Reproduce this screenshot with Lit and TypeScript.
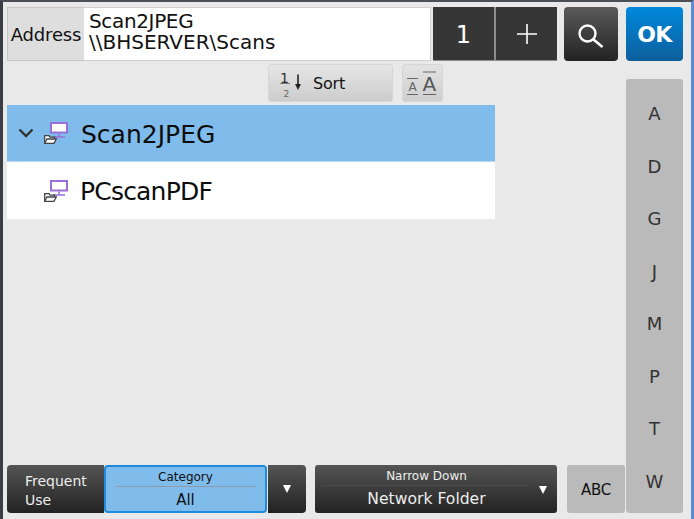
import { LitElement, html, css } from "lit";
import { customElement } from "lit/decorators.js";

const monitorIcon = html`<svg class="ficon" width="34" height="26" viewBox="0 0 34 26">
  <rect x="7" y="3" width="16" height="9.500" fill="#fff" stroke="#9a6fd6" stroke-width="2"/>
  <path d="M15 13.500v3M9 17h12" stroke="#9a6fd6" stroke-width="1.500" fill="none"/>
  <path d="M0.700 23.300v-7.600h4.300l1 1.500h4.500v1.500" fill="#fff" stroke="#444" stroke-width="1.300"/>
  <path d="M0.700 23.300l2.300-4.300h9.300l-2.300 4.300z" fill="#fff" stroke="#444" stroke-width="1.300"/>
</svg>`;

@customElement("app-root")
export class AppRoot extends LitElement {
  static styles = css`
    :host {
      display: block;
      width: 694px;
      height: 519px;
      overflow: hidden;
      font-family: "DejaVu Sans", sans-serif;
      color: #111;
    }
    .frame {
      box-sizing: border-box;
      width: 694px;
      height: 519px;
      background: #e9e9e9;
      border-left: 3px solid #3a3d44;
      border-right: 3px solid #5b8dd0;
      border-top: 2px solid #4a4f58;
      padding: 5px 8px 6px 4px;
      display: flex;
      flex-direction: column;
    }
    .top {
      display: flex;
      height: 54px;
      flex: none;
    }
    .addr-label {
      box-sizing: border-box;
      width: 77px;
      background: #dedede;
      border: 1px solid #c6c6c6;
      border-right: none;
      font-size: 18px;
      letter-spacing: -0.15px;
      display: flex;
      align-items: center;
      justify-content: center;
    }
    .addr-value {
      box-sizing: border-box;
      width: 347px;
      background: #fff;
      border: 1px solid #d0d0d0;
      border-left: none;
      font-size: 20px;
      line-height: 21px;
      padding: 3px 0 0 5px;
    }
    .addr-first {
      letter-spacing: -0.35px;
    }
    .stepper {
      display: flex;
      gap: 2px;
      margin-left: 2px;
      background: #8d8d8d;
      border-bottom: 1px solid #8d8d8d;
      box-sizing: border-box;
    }
    .step {
      width: 61px;
      background: #363636;
      color: #fff;
      font-size: 24px;
      display: flex;
      align-items: center;
      justify-content: center;
      box-sizing: border-box;
    }
    .step.num {
      padding-top: 3px;
    }
    .search {
      width: 54px;
      margin-left: 7px;
      border-radius: 4px;
      background: linear-gradient(#5a5a5a, #222);
      display: flex;
      align-items: center;
      justify-content: center;
      box-sizing: border-box;
      padding-top: 3px;
    }
    .ok {
      width: 57px;
      margin-left: 8px;
      border-radius: 4px;
      background: linear-gradient(#0088dc, #0d5f9c);
      color: #fff;
      font-size: 22px;
      letter-spacing: -0.5px;
      font-weight: bold;
      display: flex;
      align-items: center;
      justify-content: center;
    }
    .body {
      display: flex;
      flex: 1;
      min-height: 0;
      margin-top: 3px;
    }
    .main {
      flex: 1;
      min-width: 0;
      display: flex;
      flex-direction: column;
    }
    .tools {
      display: flex;
      height: 38px;
      flex: none;
      padding-left: 261px;
      gap: 9px;
    }
    .sort {
      box-sizing: border-box;
      width: 125px;
      height: 38px;
      border: 1px solid #d6d6d6;
      border-radius: 3px;
      background: linear-gradient(#e6e6e6, #cccccc);
      font-size: 16px;
      letter-spacing: -0.2px;
      display: flex;
      align-items: center;
      padding-left: 11px;
      gap: 9px;
    }
    .size {
      box-sizing: border-box;
      width: 41px;
      height: 38px;
      border: 1px solid #d6d6d6;
      border-radius: 3px;
      background: linear-gradient(#e2e2e2, #cfcfcf);
      display: flex;
      align-items: center;
      padding-left: 4px;
    }
    .list {
      width: 488px;
      margin-top: 3px;
      flex: none;
    }
    .row {
      height: 57px;
      background: #fff;
      display: flex;
      align-items: center;
      font-size: 25px;
      color: #0c0c0c;
      box-sizing: border-box;
    }
    .row.sel {
      background: #7fbcec;
      border-bottom: 1px solid #bcd7ee;
    }
    .chev {
      width: 37px;
      flex: none;
      display: flex;
      padding-left: 11px;
      box-sizing: border-box;
    }
    .row .name {
      margin-left: 3px;
      margin-top: 2px;
    }
    .row .name.tight {
      margin-left: 2px;
      letter-spacing: -0.8px;
    }
    .spacer {
      flex: 1;
    }
    .bottom {
      display: flex;
      height: 48px;
      flex: none;
    }
    .freq {
      box-sizing: border-box;
      width: 97px;
      border-radius: 4px 0 0 4px;
      background: linear-gradient(#555, #222);
      color: #eee;
      font-size: 14px;
      line-height: 19px;
      padding: 7px 0 0 18px;
    }
    .cat {
      box-sizing: border-box;
      width: 163px;
      border: 2px solid #1e8bdc;
      border-radius: 4px;
      background: #7fbcec;
      text-align: center;
      padding: 0 9px;
      display: flex;
      flex-direction: column;
    }
    .stack-top {
      font-size: 12px;
      height: 19px;
      line-height: 20px;
      border-bottom: 1px solid #8f9ba6;
      flex: none;
    }
    .stack-bottom {
      font-size: 15px;
      line-height: 26px;
    }
    .drop {
      box-sizing: border-box;
      width: 38px;
      margin-left: 1px;
      border-radius: 0 4px 4px 0;
      background: linear-gradient(#555, #222);
      display: flex;
      align-items: center;
      justify-content: center;
    }
    .tri {
      width: 0;
      height: 0;
      border-left: 4.500px solid transparent;
      border-right: 4.500px solid transparent;
      border-top: 8px solid #fff;
    }
    .narrow {
      position: relative;
      box-sizing: border-box;
      width: 242px;
      margin-left: 9px;
      border-radius: 3px;
      background: linear-gradient(#555, #222);
      color: #eee;
      text-align: center;
      padding: 2px 29px 0 7px;
      display: flex;
      flex-direction: column;
    }
    .narrow .stack-top {
      height: 18px;
      border-bottom-color: #4c4c4c;
      line-height: 19px;
      padding-left: 3px;
    }
    .narrow .stack-bottom {
      font-size: 15.600px;
      line-height: 26px;
      padding-left: 3px;
      white-space: nowrap;
    }
    .narrow .tri {
      position: absolute;
      right: 10px;
      top: 21px;
    }
    .abc {
      box-sizing: border-box;
      width: 58px;
      margin-left: 10px;
      border-radius: 3px;
      background: #bababa;
      font-size: 15px;
      letter-spacing: -0.3px;
      display: flex;
      align-items: center;
      justify-content: center;
      padding-top: 2px;
    }
    .alpha {
      box-sizing: border-box;
      width: 57px;
      margin-top: 15px;
      margin-left: 1px;
      background: #bababa;
      border-radius: 3px;
      display: flex;
      flex-direction: column;
      align-items: center;
      color: #333;
      font-size: 18px;
      padding-top: 8.500px;
    }
    .alpha span {
      height: 52.500px;
      flex: none;
      display: flex;
      align-items: center;
    }
  `;

  render() {
    return html`<div class="frame">
      <div class="top">
        <div class="addr-label">Address</div>
        <div class="addr-value"><div class="addr-first">Scan2JPEG</div><div>\\\\BHSERVER\\Scans</div></div>
        <div class="stepper">
          <div class="step num">1</div>
          <div class="step">
            <svg width="20" height="20" viewBox="0 0 20 20"><path d="M10 0v20M0 10h20" stroke="#fff" stroke-width="1.600"/></svg>
          </div>
        </div>
        <div class="search">
          <svg width="26" height="24" viewBox="0 0 26 24" fill="none" stroke="#fff">
            <circle cx="9.500" cy="9.500" r="8" stroke-width="2.400"/>
            <path d="M15.500 15.500L24.500 23" stroke-width="2.600"/>
          </svg>
        </div>
        <div class="ok">OK</div>
      </div>
      <div class="body">
        <div class="main">
          <div class="tools">
            <div class="sort">
              <svg width="24" height="30" viewBox="0 0 24 30" font-family="DejaVu Sans">
                <text x="0" y="14.500" font-size="14" fill="#333">1</text>
                <path d="M0 15.500h10" stroke="#777" stroke-width="1"/>
                <text x="3.500" y="28.500" font-size="9" fill="#666">2</text>
                <path d="M18 6.500v12" stroke="#222" stroke-width="1.600"/>
                <path d="M15 16l3 6 3-6z" fill="#222"/>
              </svg>
              <span>Sort</span>
            </div>
            <div class="size">
              <svg width="32" height="27" viewBox="0 0 32 27" font-family="DejaVu Sans">
                <path d="M0 8.500h11M0 24.500h11M16 2h13M16 24.500h13" stroke="#666" stroke-width="1"/>
                <text x="1.500" y="21" font-size="12" fill="#666">A</text>
                <text x="15.500" y="20.500" font-size="20" fill="#555">A</text>
              </svg>
            </div>
          </div>
          <div class="list">
            <div class="row sel">
              <div class="chev">
                <svg width="16" height="12" viewBox="0 0 16 12" fill="none"><path d="M1.500 2.500L8 9l6.500-6.500" stroke="#333" stroke-width="2.400"/></svg>
              </div>
              ${monitorIcon}
              <div class="name">Scan2JPEG</div>
            </div>
            <div class="row">
              <div class="chev"></div>
              ${monitorIcon}
              <div class="name tight">PCscanPDF</div>
            </div>
          </div>
          <div class="spacer"></div>
          <div class="bottom">
            <div class="freq">Frequent<br />Use</div>
            <div class="cat">
              <div class="stack-top">Category</div>
              <div class="stack-bottom">All</div>
            </div>
            <div class="drop"><div class="tri"></div></div>
            <div class="narrow">
              <div class="stack-top">Narrow Down</div>
              <div class="stack-bottom">Network Folder</div>
              <div class="tri"></div>
            </div>
            <div class="abc">ABC</div>
          </div>
        </div>
        <div class="alpha">
          ${["A", "D", "G", "J", "M", "P", "T", "W"].map((c) => html`<span>${c}</span>`)}
        </div>
      </div>
    </div>`;
  }
}
